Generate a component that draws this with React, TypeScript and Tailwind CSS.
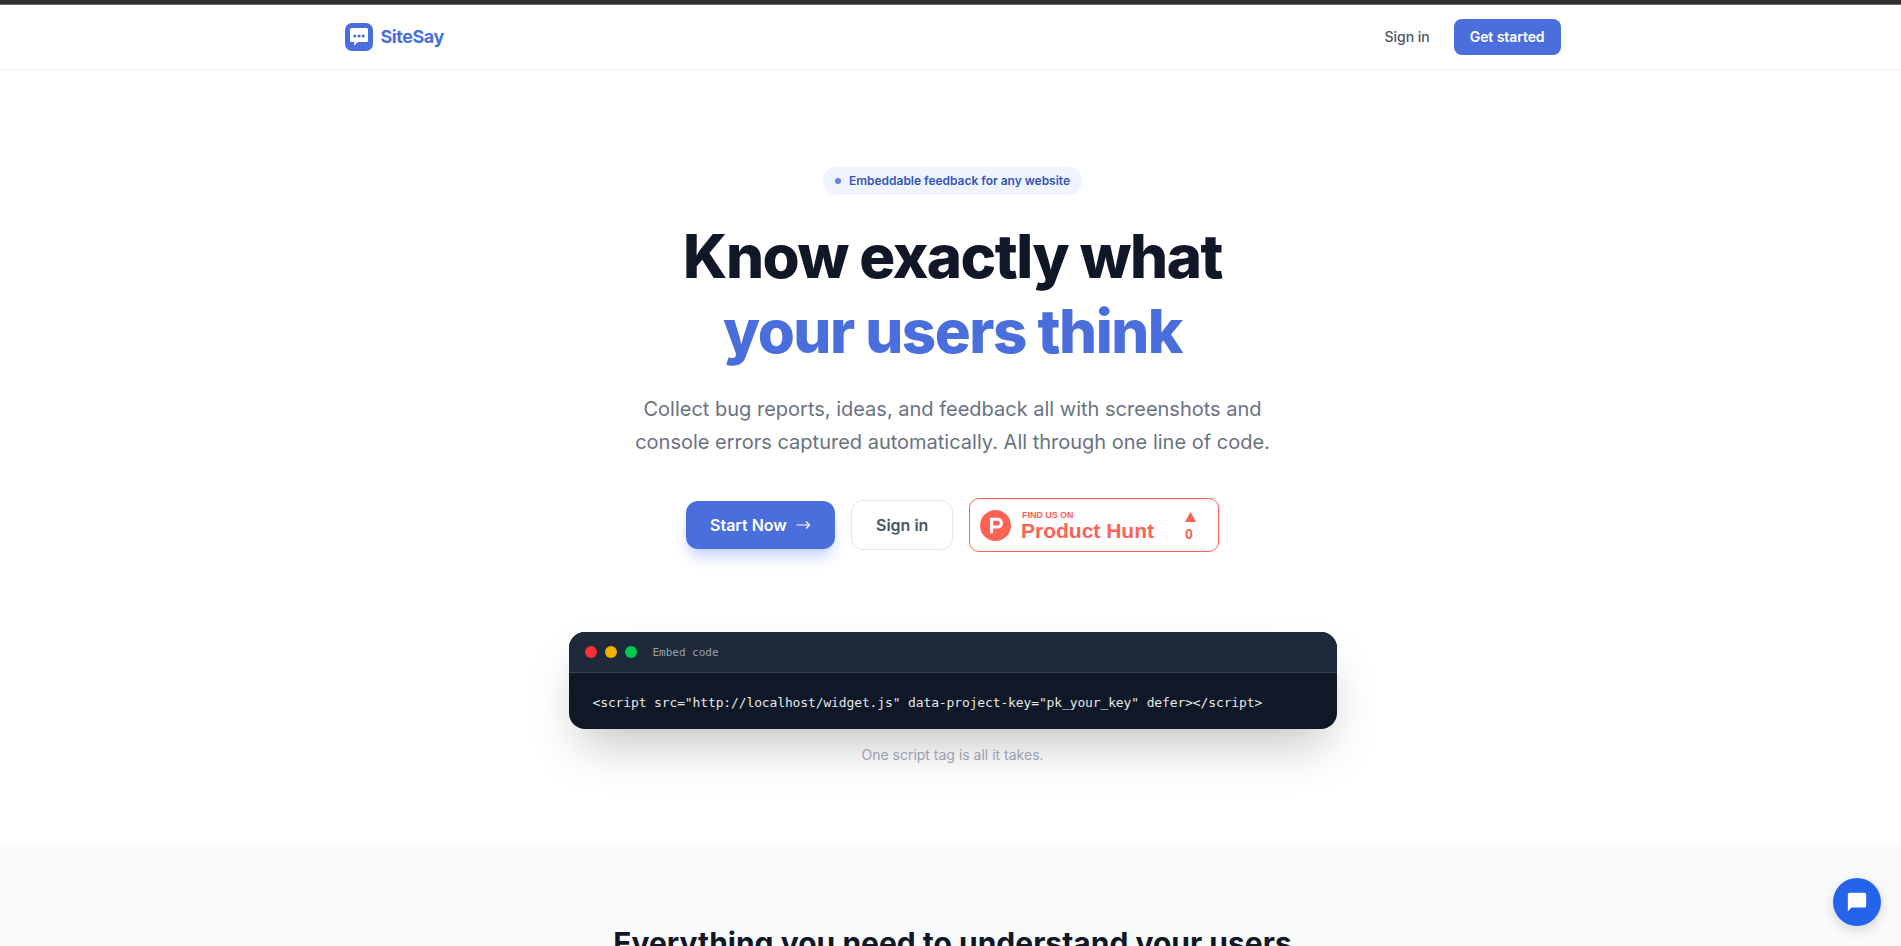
import { SiProducthunt } from 'react-icons/si';

const FEATURE_TITLE = 'Everything you need to understand your users';
const EMBED_CODE = '<script src="http://localhost/widget.js" data-project-key="pk_your_key" defer></script>';

function Logo() {
  return (
    <div className="flex items-center gap-2">
      <svg className="w-7 h-7" viewBox="0 0 28 28" fill="none">
        <rect width="28" height="28" rx="7" fill="#4a6fdc" />
        <path d="M6.500 5h15A1.500 1.500 0 0 1 23 6.500v11a1.500 1.500 0 0 1-1.500 1.500h-8.500l-3.800 3.600V19H6.500A1.500 1.500 0 0 1 5 17.500v-11A1.500 1.500 0 0 1 6.500 5z" fill="#fff" />
        <circle cx="9.800" cy="13" r="1.600" fill="#4a6fdc" />
        <circle cx="14" cy="13" r="1.600" fill="#4a6fdc" />
        <circle cx="18.200" cy="13" r="1.600" fill="#4a6fdc" />
      </svg>
      <span className="text-lg font-bold tracking-tight text-[#4a6fdc]">SiteSay</span>
    </div>
  );
}

function ProductHuntBadge() {
  return (
    <a href="#" className="flex items-center w-[250px] h-[54px] pl-2.5 pr-[22px] rounded-[10px] border border-[#ff6154] bg-white text-left text-[#ff6154] font-['Liberation_Sans',sans-serif] font-bold">
      <SiProducthunt className="w-[31px] h-[31px] shrink-0" />
      <div className="ml-2.5 flex-1 whitespace-nowrap">
        <div className="pt-px pl-px text-[9px] leading-[10px] tracking-[-0.05px]">FIND US ON</div>
        <div className="text-[21px] leading-[22px]">Product Hunt</div>
      </div>
      <div className="flex flex-col items-start pt-[3px]">
        <svg className="w-[11px] h-[10px]" viewBox="0 0 11 10" fill="currentColor">
          <path d="M5.500 0 11 10H0z" />
        </svg>
        <span className="mt-1 text-sm leading-4">0</span>
      </div>
    </a>
  );
}

export default function App() {
  return (
    <div className="h-[946px] overflow-hidden bg-white font-['Inter',sans-serif] text-gray-900">
      <div className="h-[5px] bg-[#2e2e2e] border-b border-[#6b6b6b]" />

      {/* Nav */}
      <nav className="pl-1 border-b border-gray-100">
        <div className="max-w-7xl mx-auto px-8 h-16 flex items-center justify-between">
          <Logo />
          <div className="flex items-center gap-6">
            <a href="#" className="text-sm font-medium text-gray-600">Sign in</a>
            <a href="#" className="px-4 py-2 rounded-lg bg-[#4a6fdc] text-sm font-semibold tracking-[-0.08px] text-white">Get started</a>
          </div>
        </div>
      </nav>

      {/* Hero */}
      <section className="pl-1 h-[775px] pt-[97px] flex flex-col items-center text-center">
        <div className="flex items-center gap-2 h-7 px-3 rounded-full bg-[#f0f4fe] text-xs font-semibold tracking-[-0.02px] text-[#3455b8]">
          <span className="w-1.5 h-1.5 rounded-full bg-[#6485e6]" />
          Embeddable feedback for any website
        </div>

        <h1 className="mt-6 text-6xl leading-tight font-extrabold tracking-tight">
          Know exactly what
          <br />
          <span className="text-[#4a6fdc]">your users think</span>
        </h1>

        <p className="mt-6 max-w-2xl text-xl leading-relaxed text-gray-500">
          Collect bug reports, ideas, and feedback all with screenshots and console errors captured automatically. All through one line of code.
        </p>

        <div className="mt-10 flex items-center gap-4">
          <a href="#" className="flex items-center gap-2 w-[149px] h-12 px-6 rounded-xl bg-[#4a6fdc] font-semibold text-white whitespace-nowrap shadow-lg shadow-[#c5d3fa]">
            Start Now
            <svg className="w-4 h-4 shrink-0" viewBox="0 0 16 16" fill="none" stroke="currentColor" strokeWidth="1.2">
              <path d="M1.500 8h13M11 4.500 14.500 8 11 11.500" />
            </svg>
          </a>
          <a href="#" className="flex items-center w-[102px] h-[50px] px-6 rounded-xl border border-gray-200 bg-white font-semibold text-gray-600 whitespace-nowrap">Sign in</a>
          <ProductHuntBadge />
        </div>

        {/* Embed code */}
        <div className="mt-20 w-full max-w-3xl rounded-2xl overflow-hidden bg-gray-900 text-left font-['DejaVu_Sans_Mono',monospace] shadow-2xl">
          <div className="flex items-center gap-2 h-[41px] px-4 bg-gray-800 border-b border-gray-700">
            <span className="w-3 h-3 rounded-full bg-red-500" />
            <span className="w-3 h-3 rounded-full bg-yellow-500" />
            <span className="w-3 h-3 rounded-full bg-green-500" />
            <span className="ml-2 pt-[3px] text-[11px] tracking-[-0.02px] text-gray-400">Embed code</span>
          </div>
          <div className="flex items-center h-14 pt-[3px] px-6 text-[13px] tracking-[-0.13px] text-gray-200 whitespace-pre">{EMBED_CODE}</div>
        </div>
        <p className="mt-4 text-sm text-gray-400">One script tag is all it takes.</p>
      </section>

      {/* Features */}
      <section className="pl-1 pt-20 bg-gray-50 text-center">
        <h2 className="text-3xl font-bold">{FEATURE_TITLE}</h2>
      </section>

      {/* Feedback widget */}
      <button className="fixed right-5 bottom-5 w-12 h-12 rounded-full bg-[#2563eb] flex items-center justify-center text-white shadow-[0_4px_12px_rgba(0,0,0,0.15)]">
        <svg className="w-[22px] h-[22px]" viewBox="0 0 24 24" fill="currentColor">
          <path d="M20 2H4c-1.100 0-2 .9-2 2v18l4-4h14c1.100 0 2-.9 2-2V4c0-1.100-.9-2-2-2z" />
        </svg>
      </button>
    </div>
  );
}
